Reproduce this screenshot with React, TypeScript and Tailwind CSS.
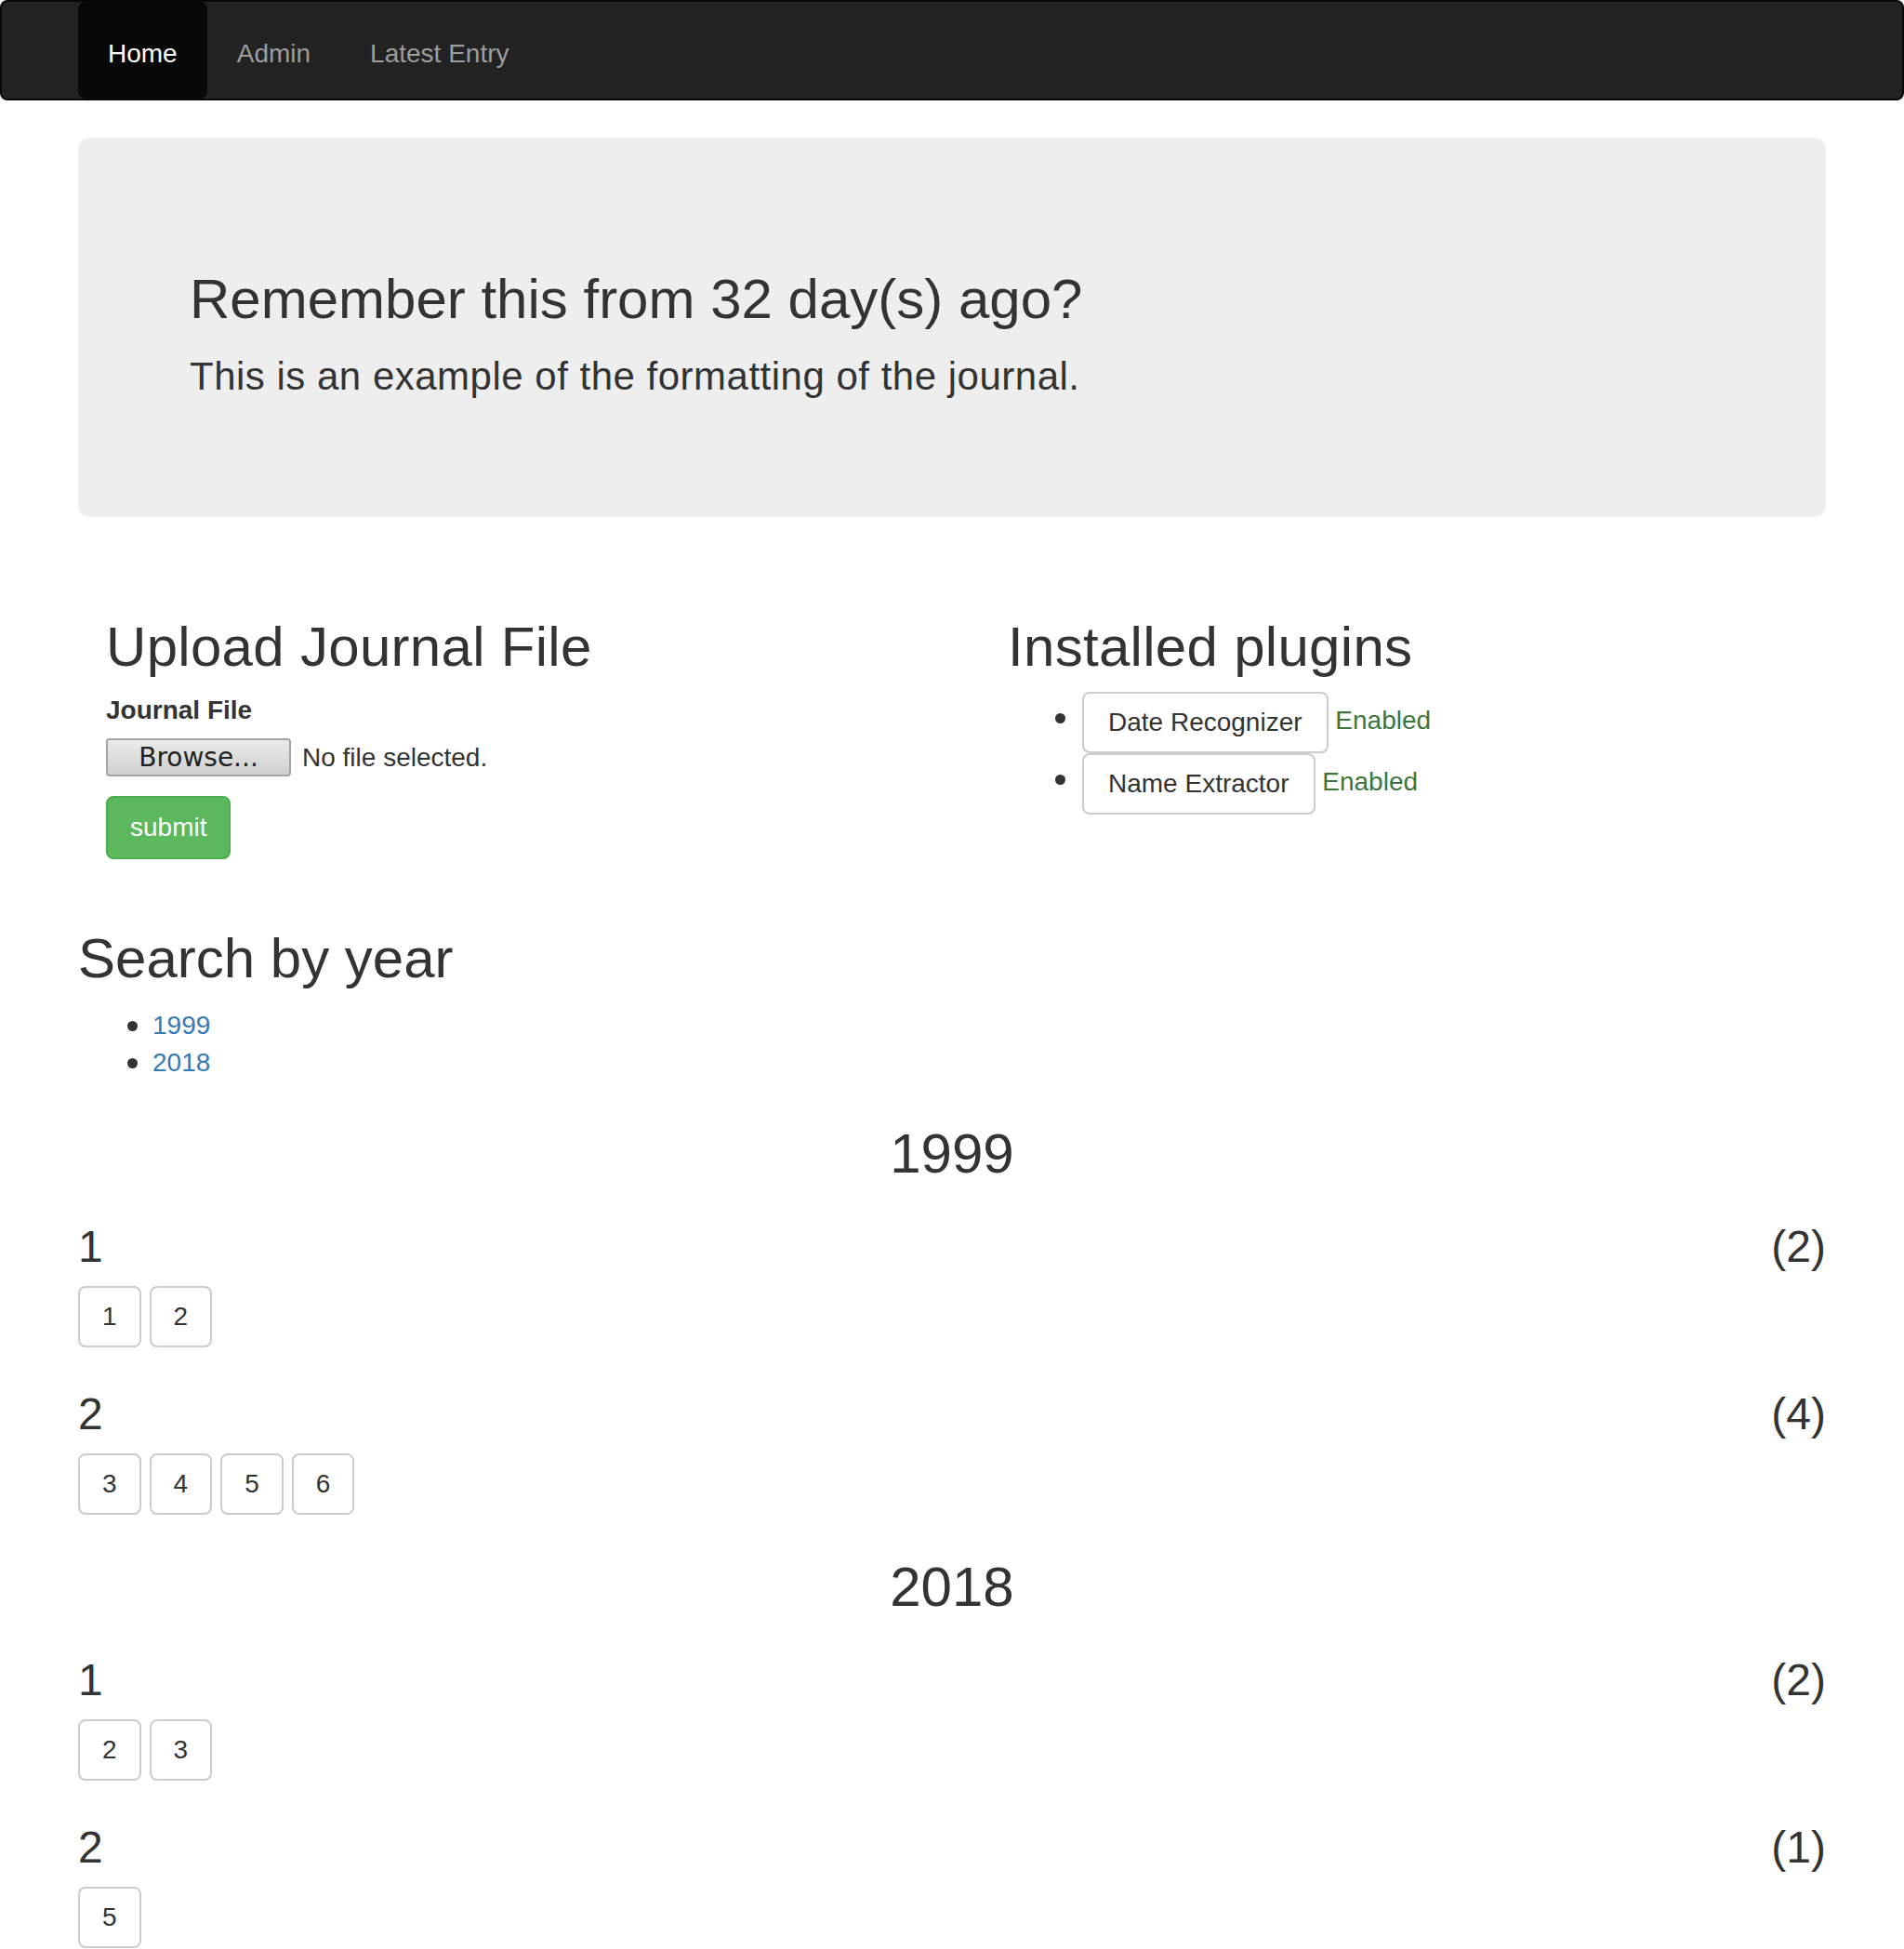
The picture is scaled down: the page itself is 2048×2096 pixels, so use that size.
const years = [
  {
    year: 1999,
    weeks: [
      { week: 1, days: [1, 2] },
      { week: 2, days: [3, 4, 5, 6] },
    ],
  },
  {
    year: 2018,
    weeks: [
      { week: 1, days: [2, 3] },
      { week: 2, days: [5] },
    ],
  },
];

const plugins = ["Date Recognizer", "Name Extractor"];

function Navbar() {
  return (
    <nav className="mb-[40px] rounded-[8px] border-2 border-[#080808] bg-[#222]">
      <div className="mx-auto w-[1940px] px-[30px]">
        <ul className="flex">
          <li>
            <a className="block rounded-[8px] bg-[#080808] px-[32px] pt-[8px] leading-[96px] text-white">Home</a>
          </li>
          <li>
            <a className="block px-[32px] pt-[8px] leading-[96px] text-[#9d9d9d]">Admin</a>
          </li>
          <li>
            <a className="block px-[32px] pt-[8px] leading-[96px] text-[#9d9d9d]">Latest Entry</a>
          </li>
        </ul>
      </div>
    </nav>
  );
}

function Btn({ children, wide }: { children: React.ReactNode; wide?: boolean }) {
  return (
    <span
      className={
        "inline-block rounded-[8px] border-2 border-[#ccc] bg-white py-[12px] align-middle leading-[38px] text-[#333] " +
        (wide ? "px-[26px]" : "px-[24px]")
      }
    >
      {children}
    </span>
  );
}

export default function App() {
  return (
    <div className="min-h-screen bg-white font-['Liberation_Sans',Arial,sans-serif] text-[28px] leading-[40px] text-[#333]">
      <Navbar />
      <div className="mx-auto w-[1940px] px-[30px]">
        {/* jumbotron */}
        <div className="mb-[60px] rounded-[12px] bg-[#eee] px-[120px] pt-[96px] pb-[91px]">
          <h2 className="mt-[40px] mb-[20px] pt-[5px] text-[60px] leading-[66px]">Remember this from 32 day(s) ago?</h2>
          <p className="mb-[30px] text-[42px] leading-[60px] tracking-[0.5px]">
            This is an example of the formatting of the journal.
          </p>
        </div>

        <div className="-mx-[30px] grid grid-cols-2">
          <div className="px-[60px]">
            <h2 className="mt-[42px] mb-[15px] pt-[5px] text-[60px] leading-[66px] tracking-[0.3px]">Upload Journal File</h2>
            <form>
              <label className="mb-[10px] block font-bold">Journal File</label>
              <div className="mt-[7px] flex h-[41px] items-center gap-[12px]">
                <span className="inline-flex h-[41px] w-[199px] items-center justify-center rounded-[4px] border-2 border-[#a3a3a3] bg-linear-to-b from-[#ebebeb] to-[#d0d0d0] font-['DejaVu_Sans',sans-serif] text-[28px] text-[#222]">
                  Browse...
                </span>
                <span>No file selected.</span>
              </div>
              <div className="mt-[21px] mb-[30px]">
                <button
                  type="submit"
                  className="h-[68px] rounded-[8px] border-2 border-[#4cae4c] bg-[#5cb85c] px-[24px] leading-[40px] text-white"
                >
                  submit
                </button>
              </div>
            </form>
          </div>
          <div className="px-[60px]">
            <h2 className="mt-[42px] mb-[15px] pt-[5px] text-[60px] leading-[66px] tracking-[0.3px]">Installed plugins</h2>
            <ul className="list-disc pl-[80px] marker:text-[36px]">
              {plugins.map((p) => (
                <li key={p}>
                  <Btn wide>{p}</Btn> <span className="text-[#3c763d]">Enabled</span>
                </li>
              ))}
            </ul>
          </div>
        </div>

        <h2 className="mt-[40px] mb-[19px] pt-[4px] text-[60px] leading-[66px]">Search by year</h2>
        <ul className="mb-[20px] pl-[80px]">
          {years.map((y) => (
            <li key={y.year} className="-ml-[27px] flex items-center gap-[16px]">
              <span className="size-[11px] shrink-0 rounded-full bg-[#333]" />
              <a className="text-[#337ab7]">{y.year}</a>
            </li>
          ))}
        </ul>

        {years.map((y) => (
          <section key={y.year}>
            <h2 className="mt-[40px] -mb-[5px] pt-[5px] text-center text-[60px] leading-[66px]">{y.year}</h2>
            {y.weeks.map((w) => (
              <div key={w.week}>
                <div className="mt-[40px] mb-[16px] flex justify-between pt-[5px] text-[48px] leading-[53px]">
                  <h3>{w.week}</h3>
                  <h3>({w.days.length})</h3>
                </div>
                <div className="flex gap-[9px]">
                  {w.days.map((d) => (
                    <Btn key={d}>{d}</Btn>
                  ))}
                </div>
              </div>
            ))}
          </section>
        ))}
      </div>
    </div>
  );
}
